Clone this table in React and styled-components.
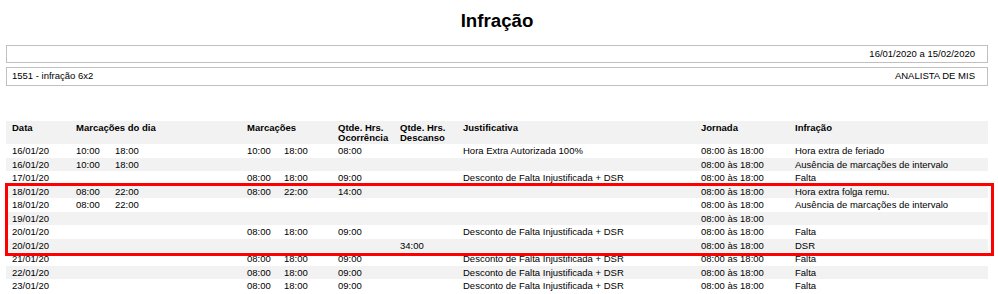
import React from "react";
import styled, { createGlobalStyle } from "styled-components";

const Global = createGlobalStyle`
  html, body { margin: 0; padding: 0; background: #fff; }
  body { font-family: "Liberation Sans", Arial, sans-serif; color: #000; }
`;

const Page = styled.div`
  width: 982px;
  margin-left: 6px;
  padding-top: 10px;
`;

const Title = styled.h1`
  margin: 0;
  font-size: 18.7px;
  line-height: 22px;
  font-weight: bold;
  text-align: center;
`;

const InfoBox = styled.div`
  margin-top: ${(p) => p.$mt}px;
  border: 1px solid #c0c0c0;
  height: ${(p) => p.$h}px;
  line-height: 16px;
  font-size: 9.5px;
  padding: 0 12px 0 5px;
  display: flex;
  justify-content: ${(p) => (p.$split ? "space-between" : "flex-end")};
  box-sizing: content-box;
`;

const Table = styled.div`
  position: relative;
  margin-top: 35px;
  font-size: 9.5px;
`;

const cols = "64px 171px 91px 62px 63px 238px 94px 1fr";

const HeadRow = styled.div`
  display: grid;
  grid-template-columns: ${cols};
  background: #f2f2f2;
  height: 23px;
  box-sizing: border-box;
  padding-top: 2px;
  font-weight: bold;
  line-height: 10px;
`;

const Row = styled.div`
  display: grid;
  grid-template-columns: ${cols};
  height: 13.5px;
  line-height: 13.5px;
  background: ${(p) => (p.$alt ? "#f2f2f2" : "#fff")};
  white-space: nowrap;
`;

const Cell = styled.div`
  padding-left: 6px;
  overflow: visible;
`;

const Time = styled.span`
  display: inline-block;
  width: ${(p) => p.$w}px;
`;

const Highlight = styled.div`
  position: absolute;
  left: -1px;
  top: 62px;
  width: 989px;
  height: 73px;
  box-sizing: border-box;
  border: 3px solid #ff0000;
  pointer-events: none;
`;

const DESC = "Desconto de Falta Injustificada + DSR";
const J = "08:00 às 18:00";
const AUS = "Ausência de marcações de intervalo";

const rows = [
  ["16/01/20", ["10:00", "18:00"], ["10:00", "18:00"], "08:00", "", "Hora Extra Autorizada 100%", J, "Hora extra de feriado"],
  ["16/01/20", ["10:00", "18:00"], null, "", "", "", J, AUS],
  ["17/01/20", null, ["08:00", "18:00"], "09:00", "", DESC, J, "Falta"],
  ["18/01/20", ["08:00", "22:00"], ["08:00", "22:00"], "14:00", "", "", J, "Hora extra folga remu."],
  ["18/01/20", ["08:00", "22:00"], null, "", "", "", J, AUS],
  ["19/01/20", null, null, "", "", "", J, ""],
  ["20/01/20", null, ["08:00", "18:00"], "09:00", "", DESC, J, "Falta"],
  ["20/01/20", null, null, "", "34:00", "", J, "DSR"],
  ["21/01/20", null, ["08:00", "18:00"], "09:00", "", DESC, J, "Falta"],
  ["22/01/20", null, ["08:00", "18:00"], "09:00", "", DESC, J, "Falta"],
  ["23/01/20", null, ["08:00", "18:00"], "09:00", "", DESC, J, "Falta"],
];

const Pair = ({ t, w }) =>
  t ? (
    <>
      <Time $w={w}>{t[0]}</Time>
      <span>{t[1]}</span>
    </>
  ) : null;

export default function App() {
  return (
    <>
      <Global />
      <Page>
        <Title>Infração</Title>
        <InfoBox $mt={13} $h={16}>
          <span>16/01/2020 a 15/02/2020</span>
        </InfoBox>
        <InfoBox $mt={4} $h={17} $split>
          <span>1551 - infração 6x2</span>
          <span>ANALISTA DE MIS</span>
        </InfoBox>
        <Table>
          <HeadRow>
            <Cell>Data</Cell>
            <Cell>Marcações do dia</Cell>
            <Cell>Marcações</Cell>
            <Cell>
              Qtde. Hrs.
              <br />
              Ocorrência
            </Cell>
            <Cell>
              Qtde. Hrs.
              <br />
              Descanso
            </Cell>
            <Cell>Justificativa</Cell>
            <Cell>Jornada</Cell>
            <Cell>Infração</Cell>
          </HeadRow>
          {rows.map((r, i) => (
            <Row key={i} $alt={i % 2 === 1}>
              <Cell>{r[0]}</Cell>
              <Cell>
                <Pair t={r[1]} w={39} />
              </Cell>
              <Cell>
                <Pair t={r[2]} w={37} />
              </Cell>
              <Cell>{r[3]}</Cell>
              <Cell>{r[4]}</Cell>
              <Cell>{r[5]}</Cell>
              <Cell>{r[6]}</Cell>
              <Cell>{r[7]}</Cell>
            </Row>
          ))}
          <Highlight />
        </Table>
      </Page>
    </>
  );
}
